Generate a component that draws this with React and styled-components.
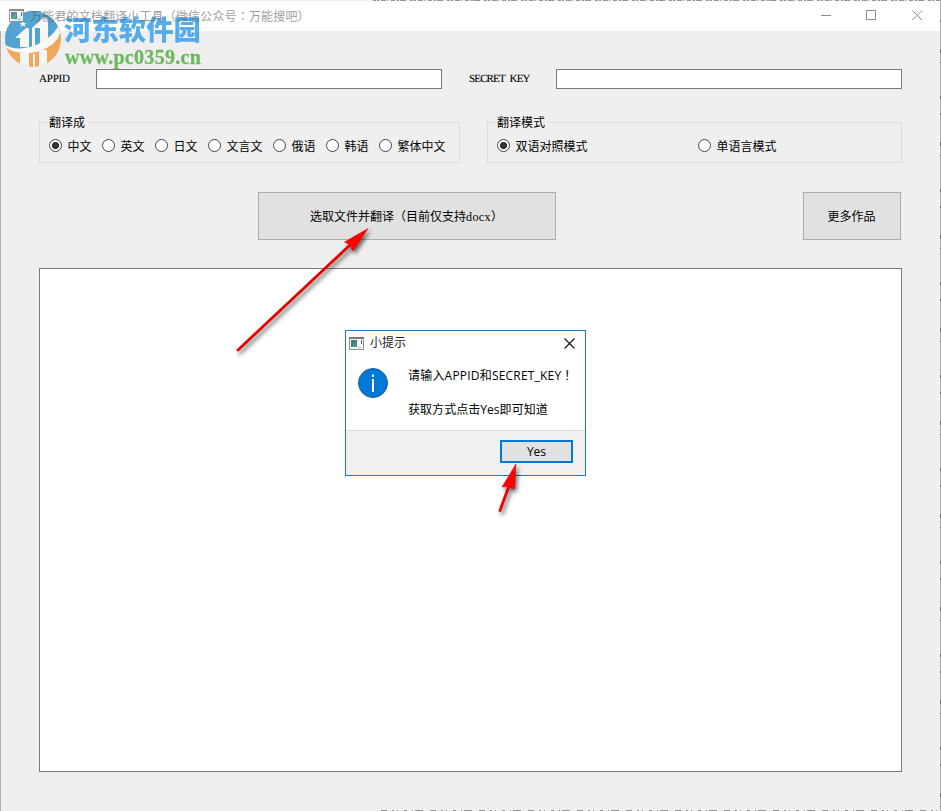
import styled, { createGlobalStyle } from "styled-components";

const languages = ["中文", "英文", "日文", "文言文", "俄语", "韩语", "繁体中文"];
const modes = ["双语对照模式", "单语言模式"];

const AppIcon = ({ dim }) => (
  <svg width="15" height="13" viewBox="0 0 15 13" opacity={dim ? 0.85 : 1}>
    <rect x="0.5" y="0.5" width="14" height="12" fill="#f8f8f8" stroke="#8f8f8f" />
    <path d="M0 1H15" stroke="#777" strokeWidth="2" />
    <rect x="2" y="3" width="6" height="7" fill="#47728f" />
    <path d="M3 9L7 4V10H3z" fill="#4c9b75" />
    <path d="M9 10.5H12" stroke="#bbb" />
    <path d="M12.5 3V7" stroke="#567" />
  </svg>
);

const Logo = () => (
  <svg width="58" height="58" viewBox="0 0 58 58">
    <defs>
      <clipPath id="disc">
        <circle cx="29" cy="29" r="28" />
      </clipPath>
    </defs>
    <g clipPath="url(#disc)">
      <rect width="58" height="58" fill="#f3a350" />
      <path d="M0 0H58V16C52 34 22 46 0 36z" fill="#4a9fd1" />
      <path d="M11 28L22 18H25V37H16V28z" fill="#f7f7f7" />
      <path d="M28 18L40 7L44 8V34H36V18z" fill="#f7f7f7" />
      <path d="M28 18H31V36H28z" fill="#f7f7f7" />
      <path d="M16 43H25V58H16zM35 40H43V58H35z" fill="#f7f7f7" />
      <path d="M29 44H31V58H29z" fill="#f7f7f7" />
      <path d="M0 34C12 44 43 37 55 15C61 30 40 44 21 43C9 43 2 39 0 34z" fill="#fafafa" />
    </g>
    <path d="M19 11L20 13L22.5 13L20.5 14.5L21.5 17L19 15.5L16.5 17L17.5 14.5L15.5 13L18 13z" fill="#f7f7f7" />
  </svg>
);

const Radio = ({ label, checked }) => (
  <RadioLabel>
    <RadioDot $checked={checked} />
    <span>{label}</span>
  </RadioLabel>
);

const App = () => {
  return (
    <Window>
      <GlobalStyle />
      <TitleBar>
        <TitleContent>
          <AppIcon dim />
          <Title>
            万能君的文档翻译小工具（微信公众号<Punct>：</Punct>万能搜吧）
          </Title>
        </TitleContent>
        <WindowControls>
          <svg width="102" height="12" viewBox="0 0 102 12" fill="none" stroke="#929292">
            <path d="M0 6.5H10" />
            <rect x="45.5" y="1.5" width="9" height="9" />
            <path d="M91.5 1.5L101 11M101 1.5L91.5 11" />
          </svg>
        </WindowControls>
      </TitleBar>

      <Body>
        <Fields>
          <FieldLabel>APPID</FieldLabel>
          <Input />
          <FieldLabel $second>SECRET KEY</FieldLabel>
          <Input />
        </Fields>

        <Groups>
          <Group>
            <Legend>翻译成</Legend>
            <Options>
              {languages.map((name, i) => (
                <Radio key={name} label={name} checked={i === 0} />
              ))}
            </Options>
          </Group>
          <Group>
            <Legend>翻译模式</Legend>
            <Options $columns>
              {modes.map((name, i) => (
                <Radio key={name} label={name} checked={i === 0} />
              ))}
            </Options>
          </Group>
        </Groups>

        <Actions>
          <Button $width={298}>
            选取文件并翻译（目前仅支持<Latin>docx</Latin>）
          </Button>
          <Button $width={98}>更多作品</Button>
        </Actions>

        <Output />
      </Body>

      <Watermark>
        <Logo />
        <WatermarkText>
          <strong>河东软件园</strong>
          <span>www.pc0359.cn</span>
        </WatermarkText>
      </Watermark>

      <Dialog>
        <DialogBar>
          <AppIcon />
          <span>小提示</span>
          <svg width="11" height="11" viewBox="0 0 11 11" stroke="#111" strokeWidth="1.1">
            <path d="M0.5 0.5L10.5 10.5M10.5 0.5L0.5 10.5" />
          </svg>
        </DialogBar>
        <DialogBody>
          <svg width="30" height="30" viewBox="0 0 30 30">
            <circle cx="15" cy="15" r="14.5" fill="#0078d7" stroke="#1b5c93" />
            <path d="M15 11V24" stroke="#fff" strokeWidth="2" />
            <path d="M15 6.5V9" stroke="#fff" strokeWidth="2" />
          </svg>
          <Message>
            <p>
              请输入APPID和SECRET_KEY<Punct>！</Punct>
            </p>
            <p>获取方式点击Yes即可知道</p>
          </Message>
        </DialogBody>
        <DialogFooter>
          <YesButton>Yes</YesButton>
        </DialogFooter>
      </Dialog>

      <Overlay width="941" height="811" viewBox="0 0 941 811">
        <g fill="none" stroke="#777" opacity="0.75">
          <path d="M373 0.5H941" strokeDasharray="3 1 2 2 5 1 1 3 4 2 2 1 6 4" />
          <path d="M381 810.5H941" strokeDasharray="6 5 2 3 1 6 3 5 1 2 8 7" />
          <path d="M940.5 0V811" stroke="#999" />
          <path d="M940.5 20V811" stroke="#444" strokeDasharray="2 27 4 9 1 33 3 14" />
          <path d="M0.5 31V811" stroke="#999" />
        </g>
        <Arrow>
          <path d="M238 350L350 245" />
          <path d="M368 228.5L344.5 242L349.5 244.5L353 251z" />
        </Arrow>
        <Arrow>
          <path d="M500 510.5L509 486" />
          <path d="M516 464L502 487L507.5 486.5L514.5 489z" />
        </Arrow>
      </Overlay>
    </Window>
  );
};

const GlobalStyle = createGlobalStyle`
  * {
    box-sizing: border-box;
  }
  body {
    margin: 0;
    overflow: hidden;
  }
  p {
    margin: 0;
  }
`;

const Window = styled.div`
  position: relative;
  width: 941px;
  height: 811px;
  padding-top: 1px;
  background: #efefef;
  color: #000;
  font-family: "Noto Sans CJK SC", sans-serif;
  font-size: 12px;
  line-height: 16px;
`;

const TitleBar = styled.div`
  height: 30px;
  padding: 0 18px 2px 9px;
  display: flex;
  align-items: center;
  background: #fff;
`;

/* stays readable above the translucent watermark */
const TitleContent = styled.div`
  position: relative;
  z-index: 1;
  display: flex;
  align-items: center;
`;

const Title = styled.span`
  margin-left: 6px;
  padding-top: 1px;
  color: rgba(90, 90, 90, 0.62);
  letter-spacing: 0.16px;
`;

/* full-width punctuation centred in its cell */
const Punct = styled.span`
  font-family: "Noto Sans CJK TC", sans-serif;
  line-height: 1;
`;

const WindowControls = styled.div`
  margin-left: auto;
  display: flex;
`;

const Body = styled.div`
  padding: 38px 39px 0;
`;

const Fields = styled.div`
  height: 20px;
  display: grid;
  grid-template-columns: 57px 346px 114px 346px;
  align-items: center;
`;

const FieldLabel = styled.label`
  padding-left: ${({ $second }) => ($second ? "27px" : "0")};
  font-family: "Liberation Serif", serif;
  font-size: 11px;
  letter-spacing: ${({ $second }) => ($second ? "-0.85px" : "-0.2px")};
  word-spacing: 3px;
  white-space: nowrap;
  text-rendering: geometricPrecision;
  -webkit-text-stroke: 0.1px #000;
`;

const Input = styled.input`
  width: 100%;
  height: 20px;
  border: 1px solid #7a7a7a;
  border-radius: 0;
  background: #fff;
  outline: none;
`;

const Groups = styled.div`
  margin-top: 33px;
  display: grid;
  grid-template-columns: 421px 415px;
  gap: 27px;
`;

const Group = styled.div`
  height: 41px;
  border: 1px solid #dcdcdc;
`;

const Legend = styled.div`
  width: fit-content;
  height: 16px;
  margin: -9px 0 0 7px;
  padding: 0 3px 0 2px;
  background: #efefef;
`;

const Options = styled.div`
  margin-top: 8px;
  padding-left: 9px;
  display: ${({ $columns }) => ($columns ? "grid" : "flex")};
  grid-template-columns: 201px auto;
  gap: ${({ $columns }) => ($columns ? "0" : "10.5px")};
`;

const RadioLabel = styled.label`
  display: flex;
  align-items: center;
  gap: 5.5px;
  white-space: nowrap;
`;

const RadioDot = styled.span`
  width: 13px;
  height: 13px;
  margin-bottom: 2px;
  border: 1px solid #444;
  border-radius: 50%;
  background: ${({ $checked }) =>
    $checked ? "radial-gradient(circle, #333 3.2px, #fff 4px)" : "#fff"};
`;

const Actions = styled.div`
  margin: 29px 1px 0 219px;
  display: flex;
  justify-content: space-between;
`;

const Button = styled.button`
  width: ${({ $width }) => $width}px;
  height: 48px;
  padding: 0 1px 1px 0;
  border: 1px solid #adadad;
  background: #e1e1e1;
  color: #000;
  font: inherit;
`;

const Latin = styled.span`
  font-family: "Liberation Serif", serif;
  font-size: 12px;
  line-height: 1;
  letter-spacing: 0.4px;
`;

const Output = styled.div`
  height: 504px;
  margin-top: 28px;
  border: 1px solid #7a7a7a;
  background: #fff;
`;

const Watermark = styled.div`
  position: absolute;
  top: 10px;
  left: 4px;
  display: flex;
  gap: 2px;
  opacity: 0.94;
`;

const WatermarkText = styled.div`
  display: flex;
  flex-direction: column;
  strong {
    height: 37px;
    color: #4ba8ee;
    font-size: 27.4px;
    font-weight: 900;
    line-height: 36px;
  }
  span {
    padding-left: 1px;
    color: #65b557;
    font-family: "Liberation Serif", serif;
    font-size: 20px;
    font-weight: 700;
    line-height: 20px;
    letter-spacing: 0.3px;
    -webkit-text-stroke: 0.3px #65b557;
  }
`;

const Dialog = styled.div`
  position: absolute;
  top: 330px;
  left: 345px;
  width: 241px;
  height: 146px;
  display: flex;
  flex-direction: column;
  border: 1px solid #1a7ac7;
  background: #fff;
  font-family: "Open Sans", "Noto Sans CJK SC", sans-serif;
`;

const DialogBar = styled.div`
  height: 24px;
  padding: 0 10px 0 3px;
  display: flex;
  align-items: center;
  span {
    margin: 0 auto 0 6px;
    color: #222;
  }
`;

const DialogBody = styled.div`
  height: 75px;
  padding: 13px 0 0 12px;
  display: flex;
  gap: 20px;
`;

const Message = styled.div`
  display: flex;
  flex-direction: column;
  gap: 18px;
  white-space: nowrap;
  p {
    height: 16px;
    letter-spacing: 0.05px;
  }
  p:first-child {
    letter-spacing: 0.2px;
  }
`;

const DialogFooter = styled.div`
  flex: 1;
  padding: 9px 12px 0 0;
  display: flex;
  justify-content: flex-end;
  border-top: 1px solid #dfdfdf;
  background: #f0f0f0;
`;

const YesButton = styled.button`
  width: 73px;
  height: 23px;
  padding: 0;
  border: 2px solid #0078d7;
  background: #e1e1e1;
  color: #000;
  font: inherit;
`;

const Overlay = styled.svg`
  position: absolute;
  top: 0;
  left: 0;
  pointer-events: none;
`;

const Arrow = styled.g`
  fill: #f00;
  stroke: #e80000;
  filter: drop-shadow(2px 3px 2px rgba(0, 0, 0, 0.6));
  path:first-child {
    stroke-width: 2.8px;
    stroke-linecap: round;
  }
  path:last-child {
    stroke-width: 0.5px;
  }
`;

export default App;
